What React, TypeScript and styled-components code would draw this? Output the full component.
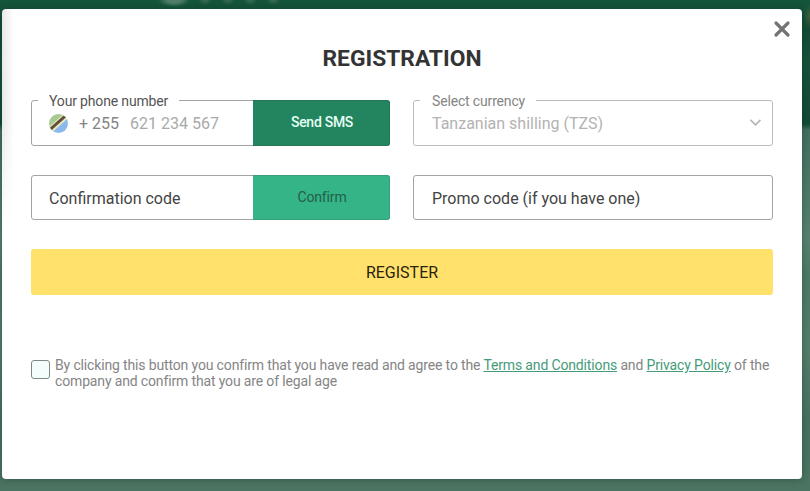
import React from 'react';
import styled, { createGlobalStyle } from 'styled-components';

const GlobalStyle = createGlobalStyle`
  * { box-sizing: border-box; }
  body { margin: 0; overflow: hidden; font-family: Roboto, "Liberation Sans", sans-serif; }
  button, input { font-family: inherit; }
`;

const Backdrop = styled.div`
  height: 491px;
  padding: 9px 8px 12px 2px;
  overflow: hidden;
  background:
    radial-gradient(ellipse 16px 7px at 174px 0, #4f7d69 40%, transparent 100%),
    radial-gradient(ellipse 7px 5px at 205px 0, #35694f 20%, transparent 100%),
    radial-gradient(ellipse 7px 5px at 228px 0, #35694f 20%, transparent 100%),
    radial-gradient(ellipse 7px 5px at 250px 0, #35694f 20%, transparent 100%),
    radial-gradient(ellipse 7px 5px at 273px 0, #35694f 20%, transparent 100%),
    radial-gradient(ellipse 7px 12px at 810px 16px, #405f3c, transparent 100%),
    linear-gradient(#14553b 0, #124b35 30px, #14533a 60px, #124b35 124px, #416f60 130px, #56806f 240px, #4b7a66 275px, #527d6b 350px, #46705f 420px, #4c7463 491px);
`;

const Dialog = styled.main`
  display: flex;
  flex-direction: column;
  position: relative;
  height: 470px;
  padding: 35px 29px 0 29px;
  border-radius: 4px;
  background:
    linear-gradient(transparent 50%, #fff) 0 0 / 12px 220px no-repeat,
    linear-gradient(90deg, #e9e9e9, #fff) 0 0 / 12px 220px no-repeat,
    #fff;
  box-shadow: 0 1px 7px rgba(0, 30, 18, 0.3);
`;

const CloseButton = styled.button`
  position: absolute;
  top: 11px;
  right: 11px;
  width: 18px;
  height: 18px;
  padding: 0;
  border: 0;
  background: none;
  svg { display: block; }
`;

const Title = styled.h1`
  margin: 0 0 26px;
  height: 30px;
  font-size: 22.8px;
  font-weight: 700;
  line-height: 30px;
  text-align: center;
  color: #333;
`;

const Form = styled.form`
  display: grid;
  grid-template-columns: 359px 360px;
  column-gap: 23px;
  row-gap: 29px;
`;

const Field = styled.div<{ $muted?: boolean; $inset?: number }>`
  display: flex;
  align-items: center;
  position: relative;
  height: 45.5px;
  padding-left: ${(p) => p.$inset ?? 17}px;
  border: 1px solid ${(p) => (p.$muted ? '#bcbcbc' : '#a3a3a3')};
  border-radius: 3px;
  color: ${(p) => (p.$muted ? '#b3b3b3' : '#444')};
  font-size: 16px;
  line-height: 20px;
`;

const FieldLabel = styled.label<{ $muted?: boolean }>`
  position: absolute;
  top: -8px;
  left: 6px;
  padding: 0 ${(p) => (p.$muted ? '11px 0 12px' : '11px')};
  padding: ${(p) => (p.$muted ? '0 11px 0 12px' : '0 11px')};
  background: #fff;
  font-size: 14px;
  letter-spacing: -0.16px;
  line-height: 16px;
  white-space: nowrap;
  color: ${(p) => (p.$muted ? '#858585' : '#555')};
`;

const Value = styled.span<{ $drop?: number }>`
  flex: 1;
  white-space: nowrap;
  padding-top: ${(p) => p.$drop ?? 2}px;
`;

const DialCode = styled.span`
  margin: 3px 11px 0 11px;
  color: #858585;
`;

const PhoneInput = styled.input`
  flex: 1;
  min-width: 0;
  padding: 2px 0 0;
  border: 0;
  outline: 0;
  background: none;
  font-size: 16px;
  line-height: 20px;
  &::placeholder { color: #a9a9a9; opacity: 1; }
`;

const ActionButton = styled.button<{ $pale?: boolean }>`
  width: 137px;
  height: 45.5px;
  margin: -1px -1px -1px 0;
  padding: ${(p) => (p.$pale ? '0 0 1px 2px' : '0 0 1px 2px')};
  flex: none;
  border: 1px solid ${(p) => (p.$pale ? '#3a9f79' : '#267656')};
  border-left: 0;
  border-radius: 0 3px 3px 0;
  background: ${(p) => (p.$pale ? '#35b488' : '#23855f')};
  color: ${(p) => (p.$pale ? '#235f49' : '#e6fff5')};
  font-size: 14px;
  letter-spacing: ${(p) => (p.$pale ? '-0.15px' : '-0.28px')};
  font-weight: ${(p) => (p.$pale ? 400 : 500)};
`;

const Chevron = styled.svg`
  margin-right: 10px;
`;

const RegisterButton = styled.button`
  grid-column: 1 / -1;
  height: 46px;
  padding: 0;
  border: 0;
  border-radius: 3px;
  background: #ffe16c;
  color: #2b210e;
  font-size: 16px;
`;

const Agreement = styled.div`
  display: flex;
  gap: 5px;
  margin-top: 62px;
  color: #858585;
  font-size: 14px;
  letter-spacing: -0.147px;
  line-height: 16.4px;
  white-space: nowrap;
`;

const Checkbox = styled.input`
  appearance: none;
  flex: none;
  width: 19px;
  height: 19px;
  margin: 3px 0 0;
  border: 1px solid #7e8984;
  border-radius: 3px;
  background: #f3fdfb;
`;

const AgreementLink = styled.a`
  color: #459b79;
  text-decoration: underline;
`;

const FlagIcon = styled.svg`
  margin-top: 2px;
`;

const Flag = () => (
  <FlagIcon width="19" height="19" viewBox="0 0 19 19">
    <defs>
      <clipPath id="flag-disc"><circle cx="9.5" cy="9.5" r="9.5" /></clipPath>
    </defs>
    <g clipPath="url(#flag-disc)">
      <path d="M0 0H19L0 19Z" fill="#a6ca92" />
      <path d="M19 0V19H0Z" fill="#8ab9ee" />
      <path d="M-1 18L18 1" stroke="#eee6bd" strokeWidth="6" />
      <path d="M-1 17.5L18 .5" stroke="#5c5139" strokeWidth="3" />
    </g>
  </FlagIcon>
);

export default function App() {
  return (
    <>
      <GlobalStyle />
      <Backdrop>
        <Dialog>
          <CloseButton aria-label="Close">
            <svg width="18" height="18" viewBox="0 0 18 18">
              <path d="M3 3L15 15M15 3L3 15" stroke="#747474" strokeWidth="3.2" strokeLinecap="round" />
            </svg>
          </CloseButton>
          <Title>REGISTRATION</Title>
          <Form>
            <Field>
              <FieldLabel htmlFor="phone">Your phone number</FieldLabel>
              <Flag />
              <DialCode>+ 255</DialCode>
              <PhoneInput id="phone" placeholder="621 234 567" />
              <ActionButton type="button">Send SMS</ActionButton>
            </Field>
            <Field $muted $inset={18}>
              <FieldLabel $muted>Select currency</FieldLabel>
              <Value $drop={3}>Tanzanian shilling (TZS)</Value>
              <Chevron width="13" height="9" viewBox="0 0 13 9" fill="none">
                <path d="M1.5 1.8L6.5 6.8L11.5 1.8" stroke="#b5b5b5" strokeWidth="1.7" />
              </Chevron>
            </Field>
            <Field>
              <Value $drop={3}>Confirmation code</Value>
              <ActionButton type="button" $pale>Confirm</ActionButton>
            </Field>
            <Field $inset={18}>
              <Value $drop={3}>Promo code (if you have one)</Value>
            </Field>
            <RegisterButton type="button">REGISTER</RegisterButton>
          </Form>
          <Agreement>
            <Checkbox type="checkbox" aria-label="Agree" />
            <span>
              By clicking this button you confirm that you have read and agree to the{' '}
              <AgreementLink>Terms and Conditions</AgreementLink> and{' '}
              <AgreementLink>Privacy Policy</AgreementLink> of the
              <br />
              company and confirm that you are of legal age
            </span>
          </Agreement>
        </Dialog>
      </Backdrop>
    </>
  );
}
